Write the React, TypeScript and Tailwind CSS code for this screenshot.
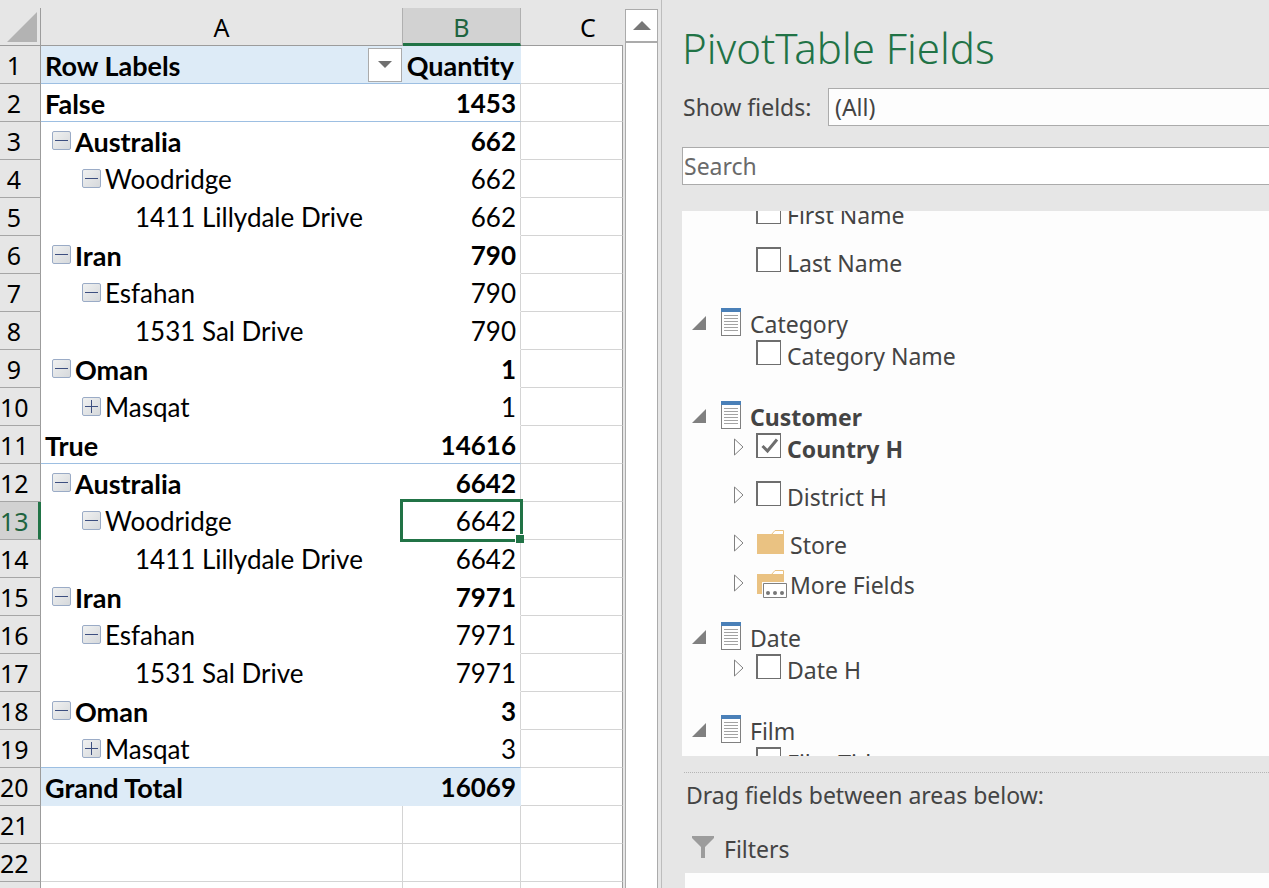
import React, { useState } from "react";

type RowKind = "heading" | "total" | "item" | "blank";

interface SheetRow {
  label?: string;
  value?: string;
  level?: 0 | 1 | 2 | 3;
  bold?: boolean;
  toggle?: "minus" | "plus";
  kind?: RowKind;
  ruled?: boolean;
  selected?: boolean;
}

const rows: SheetRow[] = [
  { label: "Row Labels", value: "Quantity", bold: true, kind: "heading", ruled: true },
  { label: "False", value: "1453", bold: true, ruled: true },
  { label: "Australia", value: "662", bold: true, level: 1, toggle: "minus" },
  { label: "Woodridge", value: "662", level: 2, toggle: "minus" },
  { label: "1411 Lillydale Drive", value: "662", level: 3 },
  { label: "Iran", value: "790", bold: true, level: 1, toggle: "minus" },
  { label: "Esfahan", value: "790", level: 2, toggle: "minus" },
  { label: "1531 Sal Drive", value: "790", level: 3 },
  { label: "Oman", value: "1", bold: true, level: 1, toggle: "minus" },
  { label: "Masqat", value: "1", level: 2, toggle: "plus" },
  { label: "True", value: "14616", bold: true, ruled: true },
  { label: "Australia", value: "6642", bold: true, level: 1, toggle: "minus" },
  { label: "Woodridge", value: "6642", level: 2, toggle: "minus", selected: true },
  { label: "1411 Lillydale Drive", value: "6642", level: 3 },
  { label: "Iran", value: "7971", bold: true, level: 1, toggle: "minus" },
  { label: "Esfahan", value: "7971", level: 2, toggle: "minus" },
  { label: "1531 Sal Drive", value: "7971", level: 3 },
  { label: "Oman", value: "3", bold: true, level: 1, toggle: "minus" },
  { label: "Masqat", value: "3", level: 2, toggle: "plus", ruled: true },
  { label: "Grand Total", value: "16069", bold: true, kind: "total" },
  { kind: "blank" },
  { kind: "blank" },
];

const indents = ["pl-1", "pl-[11px]", "pl-[41px]", "pl-[94px]"];

function Toggle({ type, name }: { type: "minus" | "plus"; name: string }) {
  return (
    <button
      type="button"
      aria-label={`${type === "minus" ? "Collapse" : "Expand"} ${name}`}
      className="mr-1 block h-[19px] w-[19px] shrink-0 rounded-[2px] border border-[#9aabc6] bg-linear-to-br from-[#f0f1f1] to-[#d6d9dc]"
    >
      <svg viewBox="0 0 17 17" className="block h-[17px] w-[17px]" shapeRendering="crispEdges">
        <path d={type === "minus" ? "M2 8.5h13" : "M2 8.5h13M8.5 2v13"} stroke="#3d4f80" fill="none" />
      </svg>
    </button>
  );
}

function Sheet() {
  return (
    <table className="w-[623px] shrink-0 table-fixed border-separate border-spacing-0 self-start font-['Lato',sans-serif] text-[26px] leading-[35px] text-black">
      <colgroup>
        <col className="w-[41px]" />
        <col className="w-[362px]" />
        <col className="w-[118px]" />
        <col className="w-[102px]" />
      </colgroup>
      <thead className="font-['Noto_Sans',sans-serif] text-[25px]">
        <tr className="h-[38px]">
          <td className="border-r border-b border-[#9c9c9c] p-0">
            <svg viewBox="0 0 40 37" className="block h-[37px] w-10">
              <path d="M37 4v30H7z" fill="#b3b3b3" />
            </svg>
          </td>
          <th scope="col" className="border-r border-b border-r-[#b0b0b0] border-b-[#9c9c9c] p-0 pt-0.5 text-center font-normal">
            A
          </th>
          <th scope="col" className="border-r border-b-[3px] border-r-[#b0b0b0] border-b-[#217346] bg-[#d2d2d2] p-0 pt-1 text-center leading-[31px] font-normal text-[#1e6440]">
            B
          </th>
          <th scope="col" className="border-b border-[#9c9c9c] p-0 pt-0.5 pl-8 text-center font-normal">
            C
          </th>
        </tr>
      </thead>
      <tbody>
        {rows.map((row, i) => {
          const filled = row.kind === "heading" || row.kind === "total";
          const blank = row.kind === "blank";
          const rule = row.ruled
            ? "border-b-[#9dbfe2]"
            : blank
              ? "border-b-[#d4d4d4]"
              : filled
                ? "border-b-[#ddebf7]"
                : "border-b-white";
          const fill = filled ? "bg-[#ddebf7]" : "bg-white";
          const weight = row.bold ? "font-bold" : "font-normal";
          return (
            <tr key={i} className="h-[38px]">
              <th
                scope="row"
                className={`border-b border-b-[#a6a6a6] p-0 pt-0.5 font-['Noto_Sans',sans-serif] text-[25px] font-normal ${
                  row.selected
                    ? "border-r-[3px] border-r-[#217346] bg-[#d2d2d2] pr-[10px] text-[#1e6440]"
                    : "border-r border-r-[#9c9c9c] pr-3"
                }`}
              >
                {i + 1}
              </th>
              <td className={`border-b p-0 ${rule} ${fill} ${weight} ${blank ? "border-r border-r-[#d4d4d4]" : ""}`}>
                {row.label && (
                  <div className={`flex h-[37px] items-center ${indents[row.level ?? 0]}`}>
                    {row.toggle && <Toggle type={row.toggle} name={row.label} />}
                    <span className={`pt-0.5 ${row.bold ? "text-[27px]" : ""}`}>{row.label}</span>
                    {row.kind === "heading" && (
                      <button
                        type="button"
                        aria-label="Filter row labels"
                        className="mr-px ml-auto flex h-[34px] w-[34px] items-center justify-center border border-[#ababab] bg-white"
                      >
                        <svg viewBox="0 0 14 7" className="h-[7px] w-[14px]">
                          <path d="M0 0h14L7 7z" fill="#707070" />
                        </svg>
                      </button>
                    )}
                  </div>
                )}
              </td>
              <td
                className={`relative border-r border-b p-0 pt-0.5 text-right ${rule} ${fill} ${weight} ${
                  filled ? "border-r-[#ddebf7]" : "border-r-[#d4d4d4]"
                } ${row.kind === "heading" ? "pr-1.5 text-[27px]" : "pr-1"}`}
              >
                {row.value}
                {row.selected && (
                  <>
                    <span className="absolute -top-[3px] -right-[3px] -bottom-[3px] -left-[3px] z-10 border-[3px] border-[#217346]" />
                    <span className="absolute -right-1 -bottom-1 z-20 h-[9px] w-[9px] border-t border-l border-white bg-[#217346]" />
                  </>
                )}
              </td>
              <td className="border-r border-b border-r-[#9c9c9c] border-b-[#d4d4d4] bg-white p-0" />
            </tr>
          );
        })}
        <tr className="h-[38px]" aria-hidden="true">
          <td className="border-r border-r-[#9c9c9c] p-0" />
          <td className="border-r border-r-[#d4d4d4] bg-white p-0" />
          <td className="border-r border-r-[#d4d4d4] bg-white p-0" />
          <td className="border-r border-r-[#9c9c9c] bg-white p-0" />
        </tr>
      </tbody>
    </table>
  );
}

function ScrollBar() {
  return (
    <div className="mt-px ml-[2px] flex w-[33px] shrink-0 flex-col border-x border-[#ababab] bg-white">
      <button
        type="button"
        aria-label="Scroll up"
        className="flex h-[34px] items-center justify-center border-t border-b-2 border-[#ababab]"
      >
        <svg viewBox="0 0 18 9" className="h-[9px] w-[18px]">
          <path d="M9 0l9 9H0z" fill="#777" />
        </svg>
      </button>
    </div>
  );
}

function TableIcon() {
  return (
    <svg viewBox="0 0 20 28" className="h-7 w-5 shrink-0" shapeRendering="crispEdges">
      <path d="M.5 2.5h19v25H.5z" fill="#fff" stroke="#808080" />
      <path d="M0 0h20v4H0z" fill="#4a80b8" />
      <path d="M3 7.5h14M3 10.5h14M3 13.5h14M3 16.5h14M3 19.5h14M3 22.5h14" stroke="#a3a3a3" />
    </svg>
  );
}

function FolderIcon({ more }: { more?: boolean }) {
  return (
    <svg viewBox="0 0 30 30" className="h-[30px] w-[30px] shrink-0">
      <path d="M14 6l4-4.500h8.500V6" fill="#fff" stroke="#eac282" />
      <path d="M0 5h27v20H0z" fill="#eac282" />
      {more && (
        <>
          <path d="M5 13h25v16H5z" fill="#fdfdfd" />
          <path d="M6.500 14.500h23v14h-23z" fill="#fff" stroke="#808080" />
          <circle cx="11" cy="24" r="2" fill="#777" />
          <circle cx="18" cy="24" r="2" fill="#777" />
          <circle cx="25" cy="24" r="2" fill="#777" />
        </>
      )}
    </svg>
  );
}

interface Field {
  name: string;
  kind: "check" | "folder" | "more";
  expandable?: boolean;
  checked?: boolean;
}

interface Group {
  name?: string;
  bold?: boolean;
  fields: Field[];
}

const groups: Group[] = [
  { fields: [{ name: "First Name", kind: "check" }, { name: "Last Name", kind: "check" }] },
  { name: "Category", fields: [{ name: "Category Name", kind: "check" }] },
  {
    name: "Customer",
    bold: true,
    fields: [
      { name: "Country H", kind: "check", expandable: true, checked: true },
      { name: "District H", kind: "check", expandable: true },
      { name: "Store", kind: "folder", expandable: true },
      { name: "More Fields", kind: "more", expandable: true },
    ],
  },
  { name: "Date", fields: [{ name: "Date H", kind: "check", expandable: true }] },
  { name: "Film", fields: [{ name: "Film Title", kind: "check" }] },
];

function FieldRow({ field }: { field: Field }) {
  const [checked, setChecked] = useState(!!field.checked);
  const isCheck = field.kind === "check";
  return (
    <li className={`flex items-start pl-[52px] ${isCheck ? "h-12" : "h-10"}`}>
      <div className="w-[22px] shrink-0 pt-[5px]">
        {field.expandable && (
          <button type="button" aria-label={`Expand ${field.name}`} className="block">
            <svg viewBox="0 0 10 18" className="block h-[18px] w-[10px]">
              <path d="M.5 1v16L9 9z" fill="#fff" stroke="#808080" />
            </svg>
          </button>
        )}
      </div>
      {isCheck ? (
        <label className={`flex items-start gap-[6px] ${checked ? "font-bold" : ""}`}>
          <span className="relative block h-[25px] w-[25px] shrink-0">
            <input
              type="checkbox"
              checked={checked}
              onChange={(e) => setChecked(e.target.checked)}
              className="block h-[25px] w-[25px] appearance-none border-t-2 border-r border-b border-l-2 border-[#6e6e6e] bg-white"
            />
            {checked && (
              <svg viewBox="0 0 25 25" className="pointer-events-none absolute inset-0 h-[25px] w-[25px]">
                <path d="M6.500 13l5 5L21 6.500" fill="none" stroke="#6e6e6e" strokeWidth="3" />
              </svg>
            )}
          </span>
          <span>{field.name}</span>
        </label>
      ) : (
        <div className="ml-px flex items-start gap-[3px]">
          <FolderIcon more={field.kind === "more"} />
          <span>{field.name}</span>
        </div>
      )}
    </li>
  );
}

function FieldsPane() {
  return (
    <aside className="flex min-w-0 flex-1 flex-col border-l border-[#bdbdbd] pl-5 font-['Noto_Sans',sans-serif] text-[23px] leading-8 text-[#444]">
      <h1 className="mt-6 text-[42px] leading-[48px] font-light text-[#217346]">PivotTable Fields</h1>
      <div className="mt-4 flex items-center">
        <label htmlFor="show-fields" className="w-[146px] shrink-0 pl-px">
          Show fields:
        </label>
        <select
          id="show-fields"
          className="h-[38px] min-w-0 flex-1 appearance-none border border-r-0 border-[#ababab] bg-[#fdfdfd] pl-[6px]"
        >
          <option>(All)</option>
        </select>
      </div>
      <input
        type="search"
        aria-label="Search"
        placeholder="Search"
        className="mt-[21px] h-[38px] shrink-0 border border-r-0 border-[#ababab] bg-white px-px placeholder:text-[#6a6a6a] placeholder:opacity-100"
      />
      <div className="mt-[26px] min-h-0 flex-1 overflow-hidden bg-[#fdfdfd]">
        <div className="-mt-3">
          {groups.map((group, i) => (
            <section key={i} className="pb-[13px]">
              {group.name && (
                <div className="flex h-8 items-start pl-[10px]">
                  <button type="button" aria-label={`Collapse ${group.name}`} className="mt-2 mr-[15px]">
                    <svg viewBox="0 0 14 14" className="block h-[14px] w-[14px]">
                      <path d="M14 0v14H0z" fill="#808080" />
                    </svg>
                  </button>
                  <TableIcon />
                  <h2 className={`ml-[9px] ${group.bold ? "font-bold" : ""}`}>{group.name}</h2>
                </div>
              )}
              <ul>
                {group.fields.map((field) => (
                  <FieldRow key={field.name} field={field} />
                ))}
              </ul>
            </section>
          ))}
        </div>
      </div>
      <div className="mt-4 ml-[2px] shrink-0 border-t border-dotted border-[#b5b5b5] pt-[6px]">
        <p className="pl-[2px]">Drag fields between areas below:</p>
        <div className="mt-[22px] flex items-start gap-[10px] pl-2">
          <svg viewBox="0 0 22 22" className="mt-[3px] h-[22px] w-[22px]">
            <path d="M0 0h22v2l-9 9v11H9V11L0 2z" fill="#9c9c9c" />
          </svg>
          <h2>Filters</h2>
        </div>
        <div className="mt-2 ml-px h-[15px] bg-[#fdfdfd]" />
      </div>
    </aside>
  );
}

export default function App() {
  return (
    <div className="flex h-screen overflow-hidden bg-[#e6e6e6] pt-2">
      <Sheet />
      <ScrollBar />
      <div className="-mt-2 ml-[3px] flex min-w-0 flex-1">
        <FieldsPane />
      </div>
    </div>
  );
}
